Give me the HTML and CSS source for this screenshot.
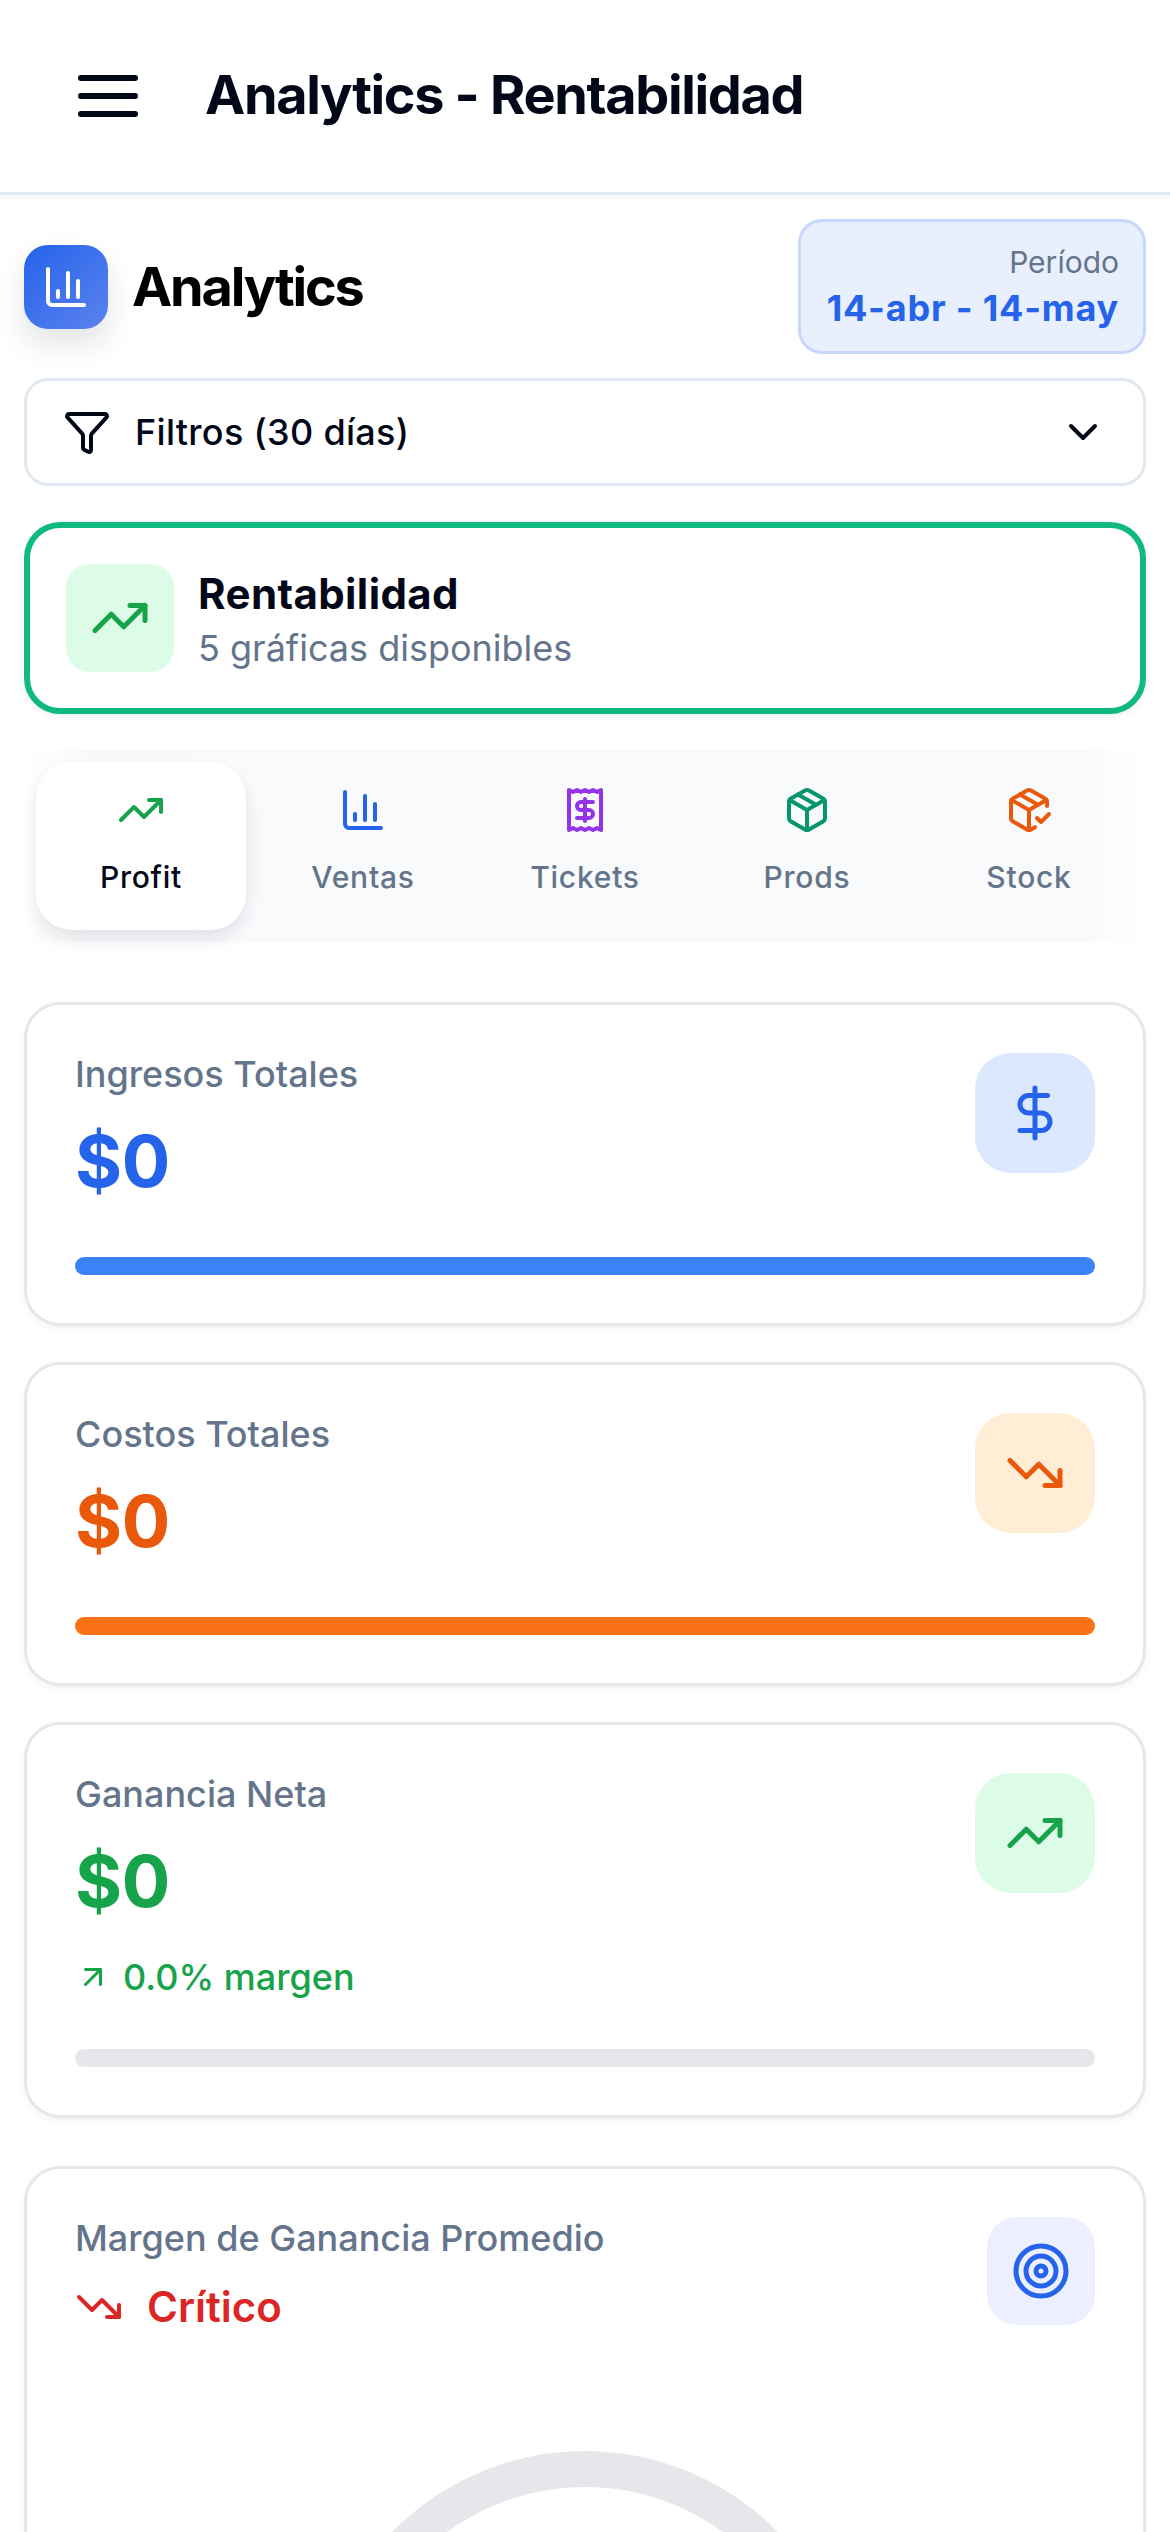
FILE: index.html
```html
<!DOCTYPE html>
<html lang="es">
<head>
<meta charset="utf-8">
<title>Analytics - Rentabilidad</title>
<link rel="stylesheet" href="styles.css">
</head>
<body>
<div class="app">
  <header class="topbar">
    <svg class="menu-icon" viewBox="0 0 60 42" fill="none"><path d="M3 3h54M3 21h54M3 39h54"/></svg>
    <h1 class="topbar-title">Analytics - Rentabilidad</h1>
  </header>
  <main class="page">
    <section class="intro">
      <div class="brand">
        <div class="brand-icon">
          <svg class="ic ic48 white" viewBox="0 0 24 24"><path d="M3 3v16a2 2 0 0 0 2 2h16"/><path d="M18 17V9"/><path d="M13 17V5"/><path d="M8 17v-3"/></svg>
        </div>
        <h2 class="brand-title">Analytics</h2>
      </div>
      <div class="period">
        <div class="period-label">Período</div>
        <div class="period-value">14-abr - 14-may</div>
      </div>
    </section>

    <section class="filter">
      <div class="filter-left">
        <svg class="ic ic48 dark" viewBox="0 0 24 24"><path d="M10 20a1 1 0 0 0 .553.895l2 1A1 1 0 0 0 14 21v-7a2 2 0 0 1 .517-1.341L21.74 4.67A1 1 0 0 0 21 3H3a1 1 0 0 0-.742 1.67l7.225 7.989A2 2 0 0 1 10 14z"/></svg>
        <span>Filtros (30 días)</span>
      </div>
      <svg class="ic ic48 dark" viewBox="0 0 24 24"><path d="m6 9 6 6 6-6"/></svg>
    </section>

    <section class="category">
      <div class="category-icon">
        <svg class="ic ic60 green" viewBox="0 0 24 24"><path d="M22 7 13.5 15.5 8.5 10.5 2 17"/><path d="M16 7h6v6"/></svg>
      </div>
      <div>
        <div class="category-title">Rentabilidad</div>
        <div class="category-sub">5 gráficas disponibles</div>
      </div>
    </section>

    <nav class="tabs">
      <div class="tab active">
        <svg class="ic ic48 green" viewBox="0 0 24 24"><path d="M22 7 13.5 15.5 8.5 10.5 2 17"/><path d="M16 7h6v6"/></svg>
        <span>Profit</span>
      </div>
      <div class="tab">
        <svg class="ic ic48 blue" viewBox="0 0 24 24"><path d="M3 3v16a2 2 0 0 0 2 2h16"/><path d="M18 17V9"/><path d="M13 17V5"/><path d="M8 17v-3"/></svg>
        <span>Ventas</span>
      </div>
      <div class="tab">
        <svg class="ic ic48 purple" viewBox="0 0 24 24"><path d="M4 2v20l2-1 2 1 2-1 2 1 2-1 2 1 2-1 2 1V2l-2 1-2-1-2 1-2-1-2 1-2-1-2 1Z"/><path d="M16 8h-6a2 2 0 1 0 0 4h4a2 2 0 1 1 0 4H8"/><path d="M12 17.5v-11"/></svg>
        <span>Tickets</span>
      </div>
      <div class="tab">
        <svg class="ic ic48 teal" viewBox="0 0 24 24"><path d="M11 21.73a2 2 0 0 0 2 0l7-4A2 2 0 0 0 21 16V8a2 2 0 0 0-1-1.73l-7-4a2 2 0 0 0-2 0l-7 4A2 2 0 0 0 3 8v8a2 2 0 0 0 1 1.73z"/><path d="M12 22V12"/><path d="m3.3 7 8.7 5 8.7-5"/><path d="m7.5 4.27 9 5.15"/></svg>
        <span>Prods</span>
      </div>
      <div class="tab">
        <svg class="ic ic48 orange" viewBox="0 0 24 24"><path d="m16 16 2 2 4-4"/><path d="M21 10V8a2 2 0 0 0-1-1.73l-7-4a2 2 0 0 0-2 0l-7 4A2 2 0 0 0 3 8v8a2 2 0 0 0 1 1.73l7 4a2 2 0 0 0 2 0l2-1.14"/><path d="m7.5 4.27 9 5.15"/><path d="M3.29 7 12 12l8.71-5"/><path d="M12 22V12"/></svg>
        <span>Stock</span>
      </div>
    </nav>

    <section class="metrics">
      <article class="card">
        <div class="card-top">
          <div>
            <div class="card-label">Ingresos Totales</div>
            <div class="card-value blue-text">$0</div>
          </div>
          <div class="card-icon bg-blue">
            <svg class="ic ic60 blue" viewBox="0 0 24 24"><path d="M12 2v20"/><path d="M17 5H9.5a3.5 3.5 0 0 0 0 7h5a3.5 3.5 0 0 1 0 7H6"/></svg>
          </div>
        </div>
        <div class="bar bar-blue"></div>
      </article>

      <article class="card">
        <div class="card-top">
          <div>
            <div class="card-label">Costos Totales</div>
            <div class="card-value orange-text">$0</div>
          </div>
          <div class="card-icon bg-orange">
            <svg class="ic ic60 orange" viewBox="0 0 24 24"><path d="M22 17 13.5 8.5 8.5 13.5 2 7"/><path d="M16 17h6v-6"/></svg>
          </div>
        </div>
        <div class="bar bar-orange"></div>
      </article>

      <article class="card">
        <div class="card-top">
          <div>
            <div class="card-label">Ganancia Neta</div>
            <div class="card-value green-text">$0</div>
            <div class="card-note green-text">
              <svg class="ic ic36 green" viewBox="0 0 24 24"><path d="M7 7h10v10"/><path d="M7 17 17 7"/></svg>
              <span>0.0% margen</span>
            </div>
          </div>
          <div class="card-icon bg-green">
            <svg class="ic ic60 green" viewBox="0 0 24 24"><path d="M22 7 13.5 15.5 8.5 10.5 2 17"/><path d="M16 7h6v6"/></svg>
          </div>
        </div>
        <div class="bar bar-grey"></div>
      </article>

      <article class="card card-margin">
        <div class="card-top">
          <div>
            <div class="card-label">Margen de Ganancia Promedio</div>
            <div class="status">
              <svg class="ic ic48 red" viewBox="0 0 24 24"><path d="M22 17 13.5 8.5 8.5 13.5 2 7"/><path d="M16 17h6v-6"/></svg>
              <span>Crítico</span>
            </div>
          </div>
          <div class="card-icon-sm">
            <svg class="ic ic60 blue" viewBox="0 0 24 24"><circle cx="12" cy="12" r="10"/><circle cx="12" cy="12" r="6"/><circle cx="12" cy="12" r="2"/></svg>
          </div>
        </div>
        <div class="gauge"></div>
      </article>
    </section>
  </main>
</div>
</body>
</html>
```

FILE: styles.css
```css
* { box-sizing: border-box; }
html, body { margin: 0; padding: 0; background: #fff; }
body { font-family: Inter, "Liberation Sans", sans-serif; color: #020817; }
h1, h2 { margin: 0; }

.app { width: 1170px; height: 2532px; overflow: hidden; background: #fff; }

.ic { fill: none; stroke: currentColor; stroke-width: 2; stroke-linecap: round; stroke-linejoin: round; flex: none; display: block; }
.ic36 { width: 36px; height: 36px; }
.ic48 { width: 48px; height: 48px; }
.ic60 { width: 60px; height: 60px; }
.white { color: #fff; }
.dark { color: #020817; }
.green { color: #16a34a; }
.blue { color: #2563eb; }
.purple { color: #9333ea; }
.teal { color: #059669; }
.orange { color: #ea580c; }
.red { color: #dc2626; }
.blue-text { color: #2563eb; }
.orange-text { color: #ea580c; }
.green-text { color: #16a34a; }

.topbar { height: 195px; display: flex; align-items: center; padding: 0 0 0 78px; gap: 67px; border-bottom: 3px solid #e2e8f0; box-shadow: 0 3px 6px rgba(15, 23, 42, .05); }
.menu-icon { width: 60px; height: 42px; flex: none; stroke: #020817; stroke-width: 6; stroke-linecap: round; }
.topbar-title { margin-bottom: 3px; font-size: 54px; font-weight: 700; letter-spacing: -1.35px; line-height: 72px; }

.page { padding: 24px 24px 0; }

.intro { display: flex; justify-content: space-between; align-items: center; }
.brand { display: flex; align-items: center; gap: 24px; }
.brand-icon { width: 84px; height: 84px; border-radius: 24px; background: linear-gradient(135deg, #2563eb, #5b82ee); display: flex; align-items: center; justify-content: center; box-shadow: 0 15px 30px rgba(15, 23, 42, .12); }
.brand-title { font-size: 54px; font-weight: 700; letter-spacing: -2.2px; color: #000; line-height: 72px; }
.period { width: 348px; height: 135px; padding: 20px 24px; border: 3px solid #c7d7fe; border-radius: 24px; background: #e8effd; text-align: right; }
.period-label { font-size: 30px; line-height: 40px; color: #64748b; }
.period-value { margin-top: 2px; font-size: 36px; line-height: 48px; font-weight: 700; letter-spacing: .8px; color: #2563eb; }

.filter { margin-top: 24px; height: 108px; display: flex; align-items: center; justify-content: space-between; padding: 0 36px; border: 3px solid #e2e8f0; border-radius: 24px; }
.filter-left { display: flex; align-items: center; gap: 24px; font-size: 36px; font-weight: 500; letter-spacing: .3px; }

.category { margin-top: 36px; height: 192px; display: flex; align-items: center; gap: 24px; padding: 0 36px; border: 6px solid #10b981; border-radius: 36px; box-shadow: 0 3px 9px rgba(15, 23, 42, .05); }
.category-icon { width: 108px; height: 108px; border-radius: 24px; background: #dcfce7; display: flex; align-items: center; justify-content: center; }
.category-title { padding-top: 6px; font-size: 42px; line-height: 54px; font-weight: 700; letter-spacing: .4px; }
.category-sub { font-size: 36px; line-height: 54px; color: #64748b; }

.tabs { position: relative; margin-top: 36px; height: 192px; padding: 12px; display: flex; gap: 12px; background: #f8fafc; }
.tabs::before, .tabs::after { content: ""; position: absolute; top: 0; bottom: 0; width: 60px; }
.tabs::before { left: 0; background: linear-gradient(90deg, #fff, rgba(255, 255, 255, 0)); }
.tabs::after { right: 0; background: linear-gradient(270deg, #fff, rgba(255, 255, 255, 0)); }
.tab { position: relative; z-index: 1; width: 210px; flex: none; padding-top: 24px; display: flex; flex-direction: column; align-items: center; gap: 22px; border-radius: 36px; font-size: 30px; line-height: 42px; font-weight: 500; letter-spacing: .75px; color: #64748b; }
.tab.active { background: #fff; color: #020817; box-shadow: 0 9px 18px rgba(15, 23, 42, .1); }

.metrics { margin-top: 60px; display: flex; flex-direction: column; gap: 36px; }
.card { padding: 48px; border: 3px solid #e5e7eb; border-radius: 36px; background: #fff; box-shadow: 0 3px 6px rgba(15, 23, 42, .05); }
.card-top { display: flex; justify-content: space-between; align-items: flex-start; margin-bottom: 42px; }
.card-label { font-size: 36px; line-height: 42px; font-weight: 500; color: #64748b; }
.card-value { margin: 30px 0 18px; font-size: 72px; line-height: 72px; font-weight: 700; letter-spacing: -.5px; }
.card-note { margin-top: 30px; display: flex; align-items: center; gap: 12px; font-size: 36px; line-height: 60px; font-weight: 500; }
.card-icon { width: 120px; height: 120px; border-radius: 36px; display: flex; align-items: center; justify-content: center; }
.bg-blue { background: #dbe8fe; }
.bg-orange { background: #ffedd5; }
.bg-green { background: #dcfce7; }
.bar { height: 18px; border-radius: 9px; }
.bar-blue { background: #3b82f6; }
.bar-orange { background: #f97316; }
.bar-grey { background: #e5e7eb; }

.card-margin { margin-top: 12px; height: 800px; }
.card-margin .card-top { margin-bottom: 114px; }
.status { margin-top: 18px; display: flex; align-items: center; gap: 24px; font-size: 42px; line-height: 60px; font-weight: 600; color: #dc2626; }
.card-icon-sm { width: 108px; height: 108px; border-radius: 30px; background: #ecefff; display: flex; align-items: center; justify-content: center; }
.gauge { width: 540px; height: 540px; margin: 0 auto; border: 36px solid #e5e7eb; border-radius: 50%; }
```
